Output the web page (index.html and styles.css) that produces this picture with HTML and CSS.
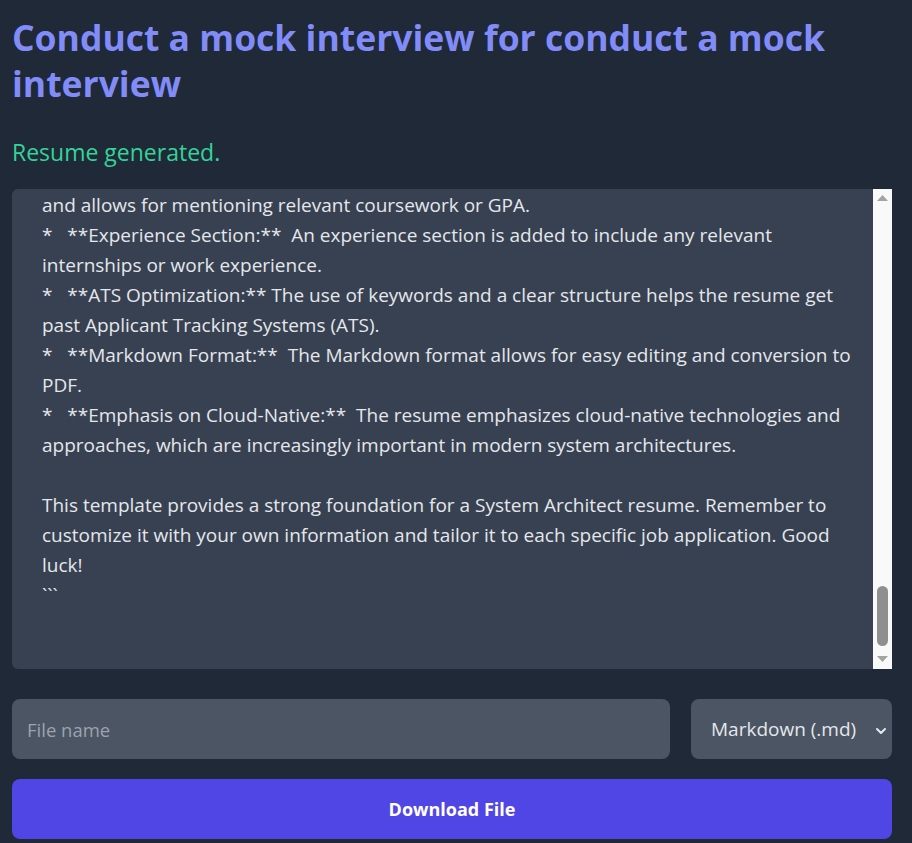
FILE: index.html
```html
<!DOCTYPE html>
<html lang="en">
<head>
<meta charset="utf-8">
<title>Mock interview</title>
<link rel="stylesheet" href="styles.css">
</head>
<body>
<main class="page">
  <h1 class="title">Conduct a mock interview for conduct a mock interview</h1>
  <p class="status">Resume generated.</p>
  <div class="editor">
    <div class="editor-text">and allows for mentioning relevant coursework or GPA.
*   **Experience Section:**  An experience section is added to include any relevant
internships or work experience.
*   **ATS Optimization:** The use of keywords and a clear structure helps the resume get
past Applicant Tracking Systems (ATS).
*   **Markdown Format:**  The Markdown format allows for easy editing and conversion to
PDF.
*   **Emphasis on Cloud-Native:**  The resume emphasizes cloud-native technologies and
approaches, which are increasingly important in modern system architectures.

This template provides a strong foundation for a System Architect resume. Remember to
customize it with your own information and tailor it to each specific job application. Good
luck!
```</div>
    <div class="scrollbar">
      <svg class="arrow" width="19" height="18" viewBox="0 0 19 18"><polygon points="4,12 15,12 9.5,6" fill="#a3a3a3"/></svg>
      <div class="track-space"></div>
      <div class="thumb"></div>
      <svg class="arrow" width="19" height="18" viewBox="0 0 19 18"><polygon points="4,5 15,5 9.5,11" fill="#a3a3a3"/></svg>
    </div>
  </div>
  <div class="controls">
    <input class="file-name" type="text" placeholder="File name">
    <div class="select-wrap">
      <select class="format">
        <option>Markdown (.md)</option>
      </select>
      <svg class="chevron" width="12" height="8" viewBox="0 0 12 8"><path d="M2 2 L6 6 L10 2" fill="none" stroke="#e5e7eb" stroke-width="2" stroke-linecap="round" stroke-linejoin="round"/></svg>
    </div>
  </div>
  <button class="download" type="button">Download File</button>
</main>
</body>
</html>
```

FILE: styles.css
```css
* { box-sizing: border-box; }
html, body { margin: 0; padding: 0; }
body {
  background: #1f2937;
  font-family: "Open Sans", "Noto Sans", sans-serif;
  color: #e5e7eb;
}
.page {
  padding: 14px 20px 0 12px;
}
.title {
  margin: 0;
  font-size: 35.5px;
  line-height: 46px;
  font-weight: 700;
  color: #818cf8;
}
.status {
  margin: 31px 0 0;
  font-size: 23px;
  line-height: 30px;
  color: #34d399;
}
.editor {
  margin-top: 22px;
  height: 480px;
  display: flex;
  background: #374151;
  border-radius: 6px 0 0 6px;
  overflow: hidden;
}
.editor-text {
  flex: 1;
  padding: 1px 0 0 30px;
  white-space: pre;
  overflow: hidden;
  font-size: 19px;
  line-height: 30px;
  color: #e5e7eb;
}
.scrollbar {
  width: 19px;
  background: #f9f9f9;
  display: flex;
  flex-direction: column;
  align-items: center;
}
.arrow { display: block; flex: none; }
.track-space { flex: 1; }
.thumb {
  width: 11px;
  height: 60px;
  margin-bottom: 5px;
  background: #8f8f8f;
  border-radius: 6px;
}
.controls {
  margin-top: 30px;
  display: flex;
  gap: 21px;
}
.file-name {
  flex: 1;
  height: 60px;
  border: none;
  border-radius: 8px;
  background: #4b5563;
  padding: 0 15px;
  font-family: inherit;
  font-size: 18.5px;
  color: #e5e7eb;
  outline: none;
}
.file-name::placeholder { color: #9ca3af; }
.select-wrap {
  position: relative;
  width: 201px;
  height: 60px;
}
.format {
  appearance: none;
  -webkit-appearance: none;
  width: 100%;
  height: 100%;
  border: none;
  border-radius: 8px;
  background: #4b5563;
  padding: 0 20px;
  font-family: inherit;
  font-size: 19px;
  color: #e5e7eb;
  outline: none;
}
.chevron {
  position: absolute;
  right: 5px;
  top: 28px;
  pointer-events: none;
}
.download {
  display: block;
  width: 100%;
  margin-top: 20px;
  height: 60px;
  border: none;
  border-radius: 8px;
  background: #4f46e5;
  color: #ffffff;
  font-family: inherit;
  font-size: 18px;
  font-weight: 700;
}
```
